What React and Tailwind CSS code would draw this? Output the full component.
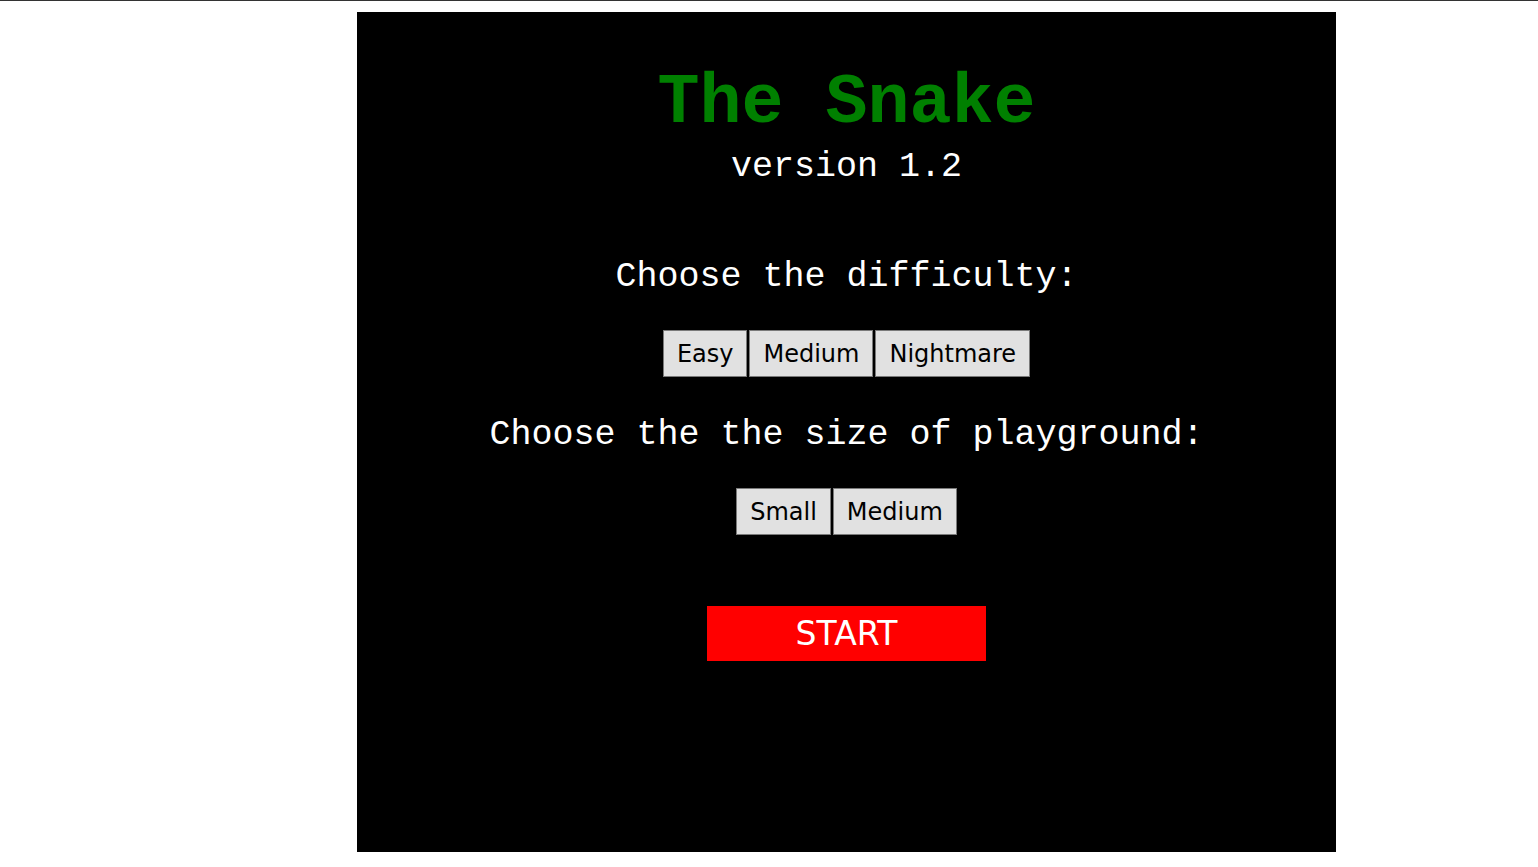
export default function App() {
  const mono = { fontFamily: '"Liberation Mono", "Courier New", monospace' };
  const sans = { fontFamily: '"DejaVu Sans", Tahoma, Verdana, sans-serif' };

  const btn =
    'h-[47px] px-[13px] bg-[#e1e1e1] border border-[#7a7a7a] text-black text-[24px] leading-none';

  return (
    <div className="min-h-screen bg-white border-t border-[#333]">
      <div className="ml-[357px] mt-[11px] w-[979px] h-[840px] bg-black flex flex-col items-center">
        <h1
          className="mt-[57px] text-[70px] leading-none font-bold text-[#008000]"
          style={mono}
        >
          The Snake
        </h1>
        <div className="mt-[11px] text-[35px] leading-none text-white" style={mono}>
          version 1.2
        </div>

        <div className="mt-[75px] text-[35px] leading-none text-white" style={mono}>
          Choose the difficulty:
        </div>
        <div className="mt-[35px] flex gap-[2px]" style={sans}>
          <button className={btn}>Easy</button>
          <button className={btn}>Medium</button>
          <button className={btn}>Nightmare</button>
        </div>

        <div className="mt-[41px] text-[35px] leading-none text-white" style={mono}>
          Choose the the size of playground:
        </div>
        <div className="mt-[35px] flex gap-[2px]" style={sans}>
          <button className={btn}>Small</button>
          <button className={btn}>Medium</button>
        </div>

        <button
          className="mt-[71px] w-[279px] h-[55px] bg-[#ff0000] text-white text-[33px] leading-none"
          style={sans}
        >
          START
        </button>
      </div>
    </div>
  );
}
